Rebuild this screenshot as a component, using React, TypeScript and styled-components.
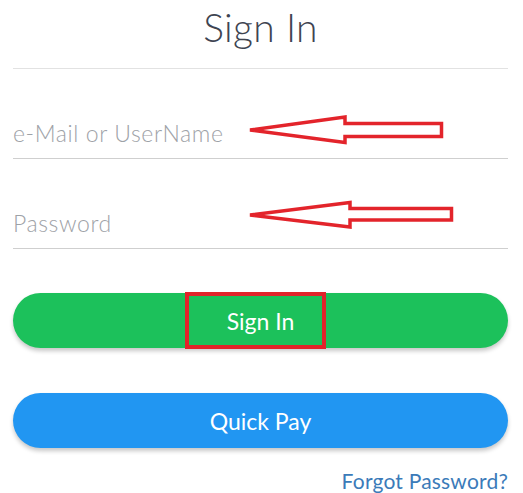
import React from "react";
import styled, { createGlobalStyle } from "styled-components";

const Global = createGlobalStyle`
  html, body { margin: 0; padding: 0; background: #ffffff; }
  body { font-family: Lato, "Open Sans", sans-serif; }
  * { box-sizing: border-box; }
`;

const Page = styled.div`
  display: flex;
  flex-direction: column;
  padding: 0 15px 0 13px;
  width: 523px;
`;

const Header = styled.header`
  height: 69px;
  border-bottom: 1px solid #e2e2e2;
  display: flex;
  justify-content: center;
  padding-top: 4px;
`;

const Title = styled.h1`
  margin: 0;
  font-weight: 300;
  font-size: 39px;
  line-height: 47px;
  color: #3e4451;
  letter-spacing: 0.3px;
`;

const Field = styled.label`
  position: relative;
  display: flex;
  align-items: flex-end;
  height: 90px;
  padding-bottom: 10px;
  border-bottom: 1px solid #cfcfcf;
`;

const Input = styled.input`
  border: none;
  outline: none;
  background: transparent;
  width: 100%;
  padding: 0;
  height: 30px;
  font-family: Lato, sans-serif;
  font-weight: 300;
  font-size: 23px;
  letter-spacing: 0.6px;
  line-height: 30px;
  color: #555;
  &::placeholder { color: #9ea2a7; opacity: 1; }
`;

const Arrow = styled.svg`
  position: absolute;
  left: 227px;
  top: 36px;
  overflow: visible;
`;

const Button = styled.button<{ $color: string; $top: number }>`
  position: relative;
  margin-top: ${(p) => p.$top}px;
  height: 55px;
  width: 100%;
  border: none;
  border-radius: 28px;
  background: ${(p) => p.$color};
  color: #ffffff;
  font-family: Lato, sans-serif;
  font-size: 23px;
  font-weight: 400;
  box-shadow: 0 3px 4px rgba(0, 0, 0, 0.22);
  cursor: pointer;
`;

const Highlight = styled.span`
  position: absolute;
  left: 172px;
  top: -1px;
  width: 141px;
  height: 57px;
  border: 4px solid #e2232a;
`;

const Footer = styled.div`
  display: flex;
  justify-content: flex-end;
  margin-top: 20px;
`;

const Link = styled.a`
  font-family: Lato, sans-serif;
  font-size: 21px;
  font-weight: 400;
  color: #3b7bb9;
  text-decoration: none;
  letter-spacing: 0.2px;
`;

const ArrowShape = ({ pts, w, h }: { pts: string; w: number; h: number }) => (
  <Arrow width={w} height={h} viewBox={`0 0 ${w} ${h}`}>
    <polygon
      points={pts}
      fill="none"
      stroke="#e3242b"
      strokeWidth={3.5}
      strokeLinejoin="miter"
    />
  </Arrow>
);

export default function App() {
  return (
    <>
      <Global />
      <Page>
        <Header>
          <Title>Sign In</Title>
        </Header>
        <Field>
          <Input placeholder="e-Mail or UserName" />
          <ArrowShape
            w={210}
            h={45}
            pts="10,25 105,12 105,18.5 201.5,18.5 201.5,31.5 105,31.5 105,37.5"
          />
        </Field>
        <Field>
          <Input type="password" placeholder="Password" />
          <ArrowShape
            w={220}
            h={40}
            pts="10,20 110,7.5 110,13.5 211.5,13.5 211.5,25 110,25 110,32"
          />
        </Field>
        <Button $color="#1cc15b" $top={44}>
          Sign In
          <Highlight />
        </Button>
        <Button $color="#2196f2" $top={45}>
          Quick Pay
        </Button>
        <Footer>
          <Link href="#">Forgot Password?</Link>
        </Footer>
      </Page>
    </>
  );
}
